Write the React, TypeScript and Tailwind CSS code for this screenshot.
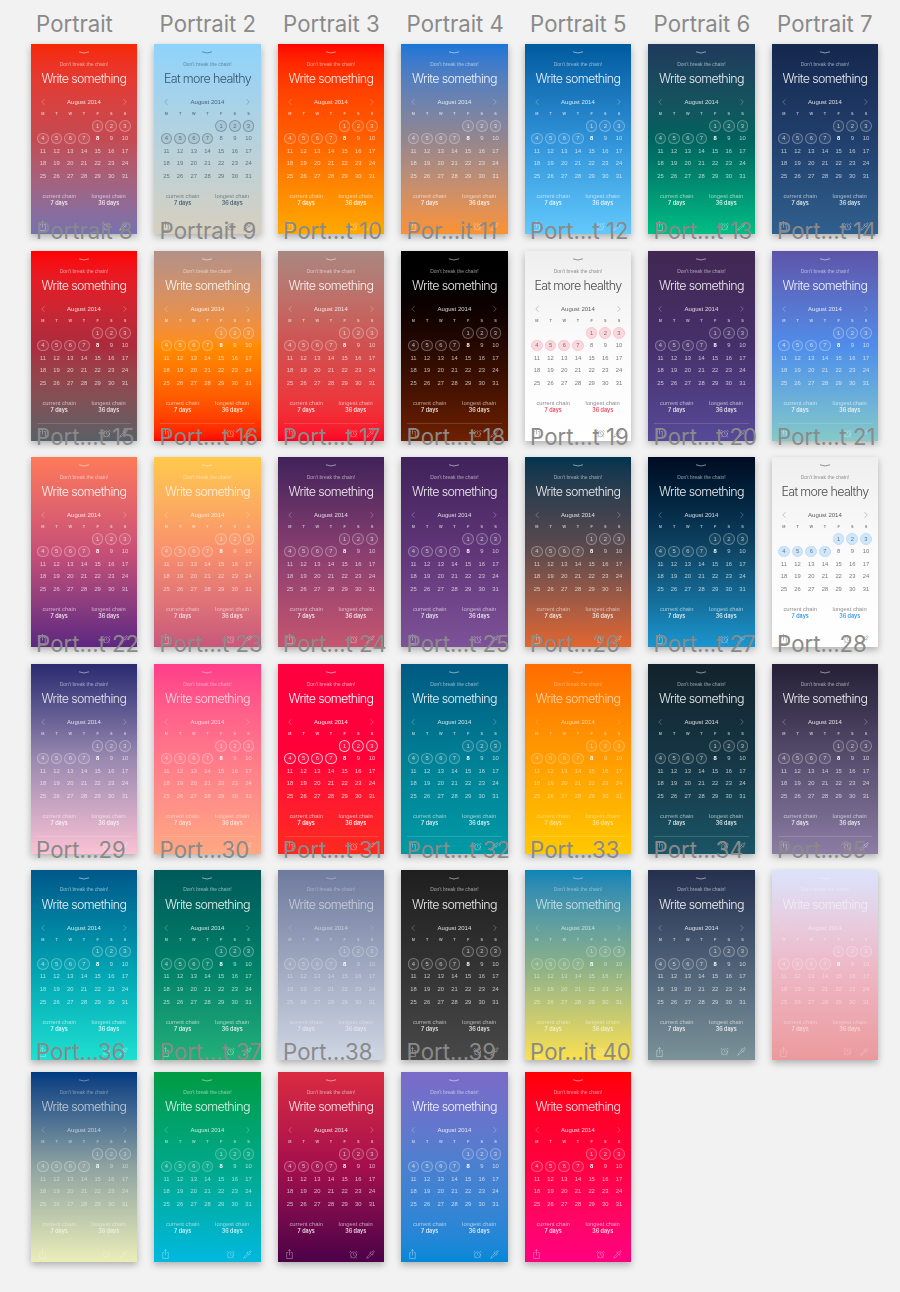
import { AlarmClock, Pipette, ChevronLeft, ChevronRight } from "lucide-react";

type C = { n: string; g: string; t?: string; c?: string; b?: string; v?: string; title?: string };

const W = "text-white/90";
const rows: { mb: string; line?: boolean; cards: C[] }[] = [
  {
    mb: "-mb-[17px]",
    cards: [
      { n: "Portrait", g: "from-[#f72800] via-[#c44a52] to-[#7672b0]" },
      { n: "Portrait 2", g: "from-[#8ed3fb] via-[#b5d2de] to-[#d7cfbf]", t: "text-[#2c4860]/90", c: "bg-black/5", b: "border-black/25", title: "Eat more healthy" },
      { n: "Portrait 3", g: "from-[#ff0000] via-[#ff5f00] to-[#ffa900]" },
      { n: "Portrait 4", g: "from-[#1876d8] via-[#93868f] to-[#fb922e]" },
      { n: "Portrait 5", g: "from-[#005a9e] via-[#2f92d8] to-[#62c9fc]" },
      { n: "Portrait 6", g: "from-[#1f3a5c] via-[#00625e] to-[#00be84]" },
      { n: "Portrait 7", g: "from-[#15284e] via-[#213f6c] to-[#30608e]" },
    ],
  },
  {
    mb: "-mb-[18px]",
    line: true,
    cards: [
      { n: "Portrait 8", g: "from-[#ff0000] via-[#ab2b3d] to-[#586067]" },
      { n: "Portrait 9", g: "from-[#b29188] via-[#ff8d00] to-[#ff0000]" },
      { n: "Port…t 10", g: "from-[#a88780] via-[#d05050] to-[#ff0026]" },
      { n: "Por…it 11", g: "from-[#000000] via-[#260800] to-[#6e2000]" },
      { n: "Port…t 12", g: "from-[#efefef] via-[#fbfbfb] to-[#ffffff]", t: "text-[#3a3a3a]/90", c: "bg-[#fbd8dd]", b: "border-[#f8c4cc]", v: "text-[#f0344f]", title: "Eat more healthy" },
      { n: "Port…t 13", g: "from-[#412752] via-[#46306a] to-[#564a98]" },
      { n: "Port…t 14", g: "from-[#5c55a9] via-[#4f8dea] to-[#85c9c8]" },
    ],
  },
  {
    mb: "-mb-[17px]",
    cards: [
      { n: "Port…t 15", g: "from-[#ff7a58] via-[#c84f76] to-[#5e2681]" },
      { n: "Port…t 16", g: "from-[#ffca4a] via-[#f88f6c] to-[#c8587c]", t: "text-white/80" },
      { n: "Port…t 17", g: "from-[#40225a] via-[#8a3e70] to-[#c5566f]" },
      { n: "Port…t 18", g: "from-[#40225a] via-[#603678] to-[#7e5298]" },
      { n: "Port…t 19", g: "from-[#00344f] via-[#5e4a4c] to-[#e2662e]" },
      { n: "Port…t 20", g: "from-[#000c22] via-[#0f4666] to-[#1a96cf]" },
      { n: "Port…t 21", g: "from-[#efefef] via-[#fbfbfb] to-[#ffffff]", t: "text-[#3a3a3a]/90", c: "bg-[#cfe7fb]", b: "border-[#bcdcf8]", v: "text-[#1f90e8]", title: "Eat more healthy" },
    ],
  },
  {
    mb: "-mb-[18.5px]",
    line: true,
    cards: [
      { n: "Port…t 22", g: "from-[#2c2a70] via-[#9a89b0] to-[#fbc2d4]", t: "text-white/85" },
      { n: "Port…t 23", g: "from-[#ff3d8a] via-[#ff7a8a] to-[#ffa882]", t: "text-white/75" },
      { n: "Port…t 24", g: "from-[#ff0040] via-[#ff0038] to-[#ff2a1e]", t: "text-white", b: "border-white/70" },
      { n: "Port…t 25", g: "from-[#005a82] via-[#007f95] to-[#009aa5]" },
      { n: "Port…t 26", g: "from-[#ff6c00] via-[#ff9c00] to-[#ffc900]", t: "text-white/65", b: "border-white/25" },
      { n: "Port…t 27", g: "from-[#13232c] via-[#153645] to-[#1a5566]" },
      { n: "Port…28", g: "from-[#252036] via-[#574e6e] to-[#8c7ca4]" },
    ],
  },
  {
    mb: "-mb-[21.5px]",
    cards: [
      { n: "Port…29", g: "from-[#00588a] via-[#00a0b0] to-[#1ee0d0]" },
      { n: "Port…30", g: "from-[#00595a] via-[#008068] to-[#22b07a]" },
      { n: "Port…t 31", g: "from-[#6f7b9e] via-[#9fa8c0] to-[#cfd6e3]", t: "text-white/55", b: "border-white/25" },
      { n: "Port…t 32", g: "from-[#1f1f1f] via-[#333333] to-[#484848]" },
      { n: "Port…33", g: "from-[#0a84b8] via-[#8ab088] to-[#fbe04a]", t: "text-white/70", b: "border-white/25" },
      { n: "Port…t 34", g: "from-[#25304f] via-[#4e6177] to-[#7a9298]" },
      { n: "Port…35", g: "from-[#dbe3fb] via-[#eeb9c8] to-[#eb9a9c]", t: "text-white/55", b: "border-white/25" },
    ],
  },
  {
    mb: "mb-0",
    cards: [
      { n: "Port…36", g: "from-[#003a80] via-[#8fa3a0] to-[#ebeeb8]", t: "text-white/65", b: "border-white/30" },
      { n: "Port…t 37", g: "from-[#009b40] via-[#00a88a] to-[#00b8e0]", t: "text-white/85", b: "border-white/25" },
      { n: "Port…38", g: "from-[#da2a40] via-[#a50e4c] to-[#4c0048]" },
      { n: "Port…39", g: "from-[#7a6ac8] via-[#4a80d0] to-[#0088d8]" },
      { n: "Por…it 40", g: "from-[#ff0000] via-[#ff0040] to-[#ff0080]" },
    ],
  },
];

const labels = [
  ["Portrait", "Portrait 2", "Portrait 3", "Portrait 4", "Portrait 5", "Portrait 6", "Portrait 7"],
  ["Portrait 8", "Portrait 9", "Port…t 10", "Por…it 11", "Port…t 12", "Port…t 13", "Port…t 14"],
  ["Port…t 15", "Port…t 16", "Port…t 17", "Port…t 18", "Port…t 19", "Port…t 20", "Port…t 21"],
  ["Port…t 22", "Port…t 23", "Port…t 24", "Port…t 25", "Port…26", "Port…t 27", "Port…28"],
  ["Port…29", "Port…30", "Port…t 31", "Port…t 32", "Port…33", "Port…34", "Port…35"],
  ["Port…36", "Port…t 37", "Port…38", "Port…39", "Por…it 40", "", ""],
];

const days = [
  0, 0, 0, 0, 1, 2, 3, 4, 5, 6, 7, 8, 9, 10, 11, 12, 13, 14, 15, 16, 17, 18, 19, 20, 21, 22, 23, 24, 25, 26, 27, 28, 29, 30, 31,
];

function Phone({ card, line }: { card: C; line?: boolean }) {
  const tone = card.t ?? W;
  const boldEight = !card.c;
  return (
    <div className={`flex h-[190px] w-[106.7px] flex-col bg-linear-to-b shadow-[0_3px_7px_rgba(0,0,0,0.28)] ${card.g} ${tone}`}>
      <div className="flex h-full flex-col font-['Liberation_Sans',sans-serif] blur-[0.4px]">
        <svg className="mx-auto mt-[7px] block h-[3px] w-[12px] shrink-0 opacity-70" viewBox="0 0 12 3" fill="none">
          <path d="M1 .8Q6 3.2 11 .8" stroke="currentColor" strokeWidth="0.8" />
        </svg>
        <div className="mt-[6.5px] h-[7px] text-center text-[5px] leading-[7px] opacity-60">Don't break the chain!</div>
        <div className="mt-[3.5px] h-[16px] text-center font-['Inter',sans-serif] text-[12.5px] font-light leading-[16px] tracking-[-0.65px] whitespace-nowrap">{card.title ?? "Write something"}</div>
        <div className="mx-auto mt-[11px] flex h-[8px] w-[95.7px] items-center justify-between text-[6px] leading-[8px]">
          <span className="flex w-[13.67px] justify-center opacity-80"><ChevronLeft size={10} strokeWidth={0.9} /></span>
          <span className="opacity-90">August 2014</span>
          <span className="flex w-[13.67px] justify-center opacity-80"><ChevronRight size={10} strokeWidth={0.9} /></span>
        </div>
        <div className="mx-auto mt-[5px] grid h-[6px] w-[95.7px] grid-cols-7 text-center text-[3.8px] font-bold leading-[6px] opacity-70">
          {["M", "T", "W", "T", "F", "S", "S"].map((d, i) => (
            <span key={i}>{d}</span>
          ))}
        </div>
        <div className="mx-auto mt-[2.7px] grid w-[95.7px] grid-cols-7 text-center text-[5.8px]">
          {days.map((d, i) => (
            <div key={i} className="flex h-[12.6px] items-center justify-center">
              {d === 0 ? null : d <= 7 ? (
                <span className={`flex h-[11.6px] w-[11.6px] items-center justify-center rounded-full border ${card.b ?? "border-white/30"} ${card.c ?? "bg-white/5"}`}>
                  <span className="opacity-75">{d}</span>
                </span>
              ) : d === 8 && boldEight ? (
                <span className="font-bold text-white">{d}</span>
              ) : (
                <span className="opacity-75">{d}</span>
              )}
            </div>
          ))}
        </div>
        <div className="mx-auto mt-[10.8px] grid w-[99px] grid-cols-2 text-center text-[5.8px] leading-[7px]">
          <span className="opacity-65">current chain</span>
          <span className="opacity-65">longest chain</span>
          <span className={`font-['Inter',sans-serif] text-[5.5px] font-medium ${card.v ?? ""}`}>7 days</span>
          <span className={`font-['Inter',sans-serif] text-[5.5px] font-medium ${card.v ?? ""}`}>36 days</span>
        </div>
        <div className={`mx-[6px] mt-[8.5px] h-px shrink-0 ${line ? "bg-white/15" : ""}`} />
        <div className="mt-[4.5px] flex h-[10px] items-center pl-[8px] pr-[9px] opacity-75">
          <svg className="h-[10px] w-[7px]" viewBox="0 0 7 10" fill="none" stroke="currentColor" strokeWidth="0.5">
            <path d="M2.2 3.5H.7v6h5.6v-6H4.8M3.5 6.5V.6M2.2 1.8 3.5.6l1.3 1.2" />
          </svg>
          <AlarmClock className="ml-auto" size={9} strokeWidth={1.2} />
          <Pipette className="ml-[8px]" size={9} strokeWidth={1.2} />
        </div>
      </div>
    </div>
  );
}

export default function App() {
  return (
    <div className="min-h-[1292px] bg-[#f2f2f2] pt-[10px] pl-[30.6px] font-['Inter','Noto_Sans',sans-serif]">
      {rows.map((row, r) => (
        <div key={r} className={`flex ${row.mb}`}>
          {row.cards.map((card, i) => (
            <div key={i} className="w-[123.5px] shrink-0">
              <div className="relative z-10 mb-[6px] ml-[5.5px] h-[28px] text-[22.2px] leading-[28px] whitespace-nowrap text-[#8a8a8a]">
                {labels[r][i]}
              </div>
              <Phone card={card} line={row.line} />
            </div>
          ))}
        </div>
      ))}
    </div>
  );
}
